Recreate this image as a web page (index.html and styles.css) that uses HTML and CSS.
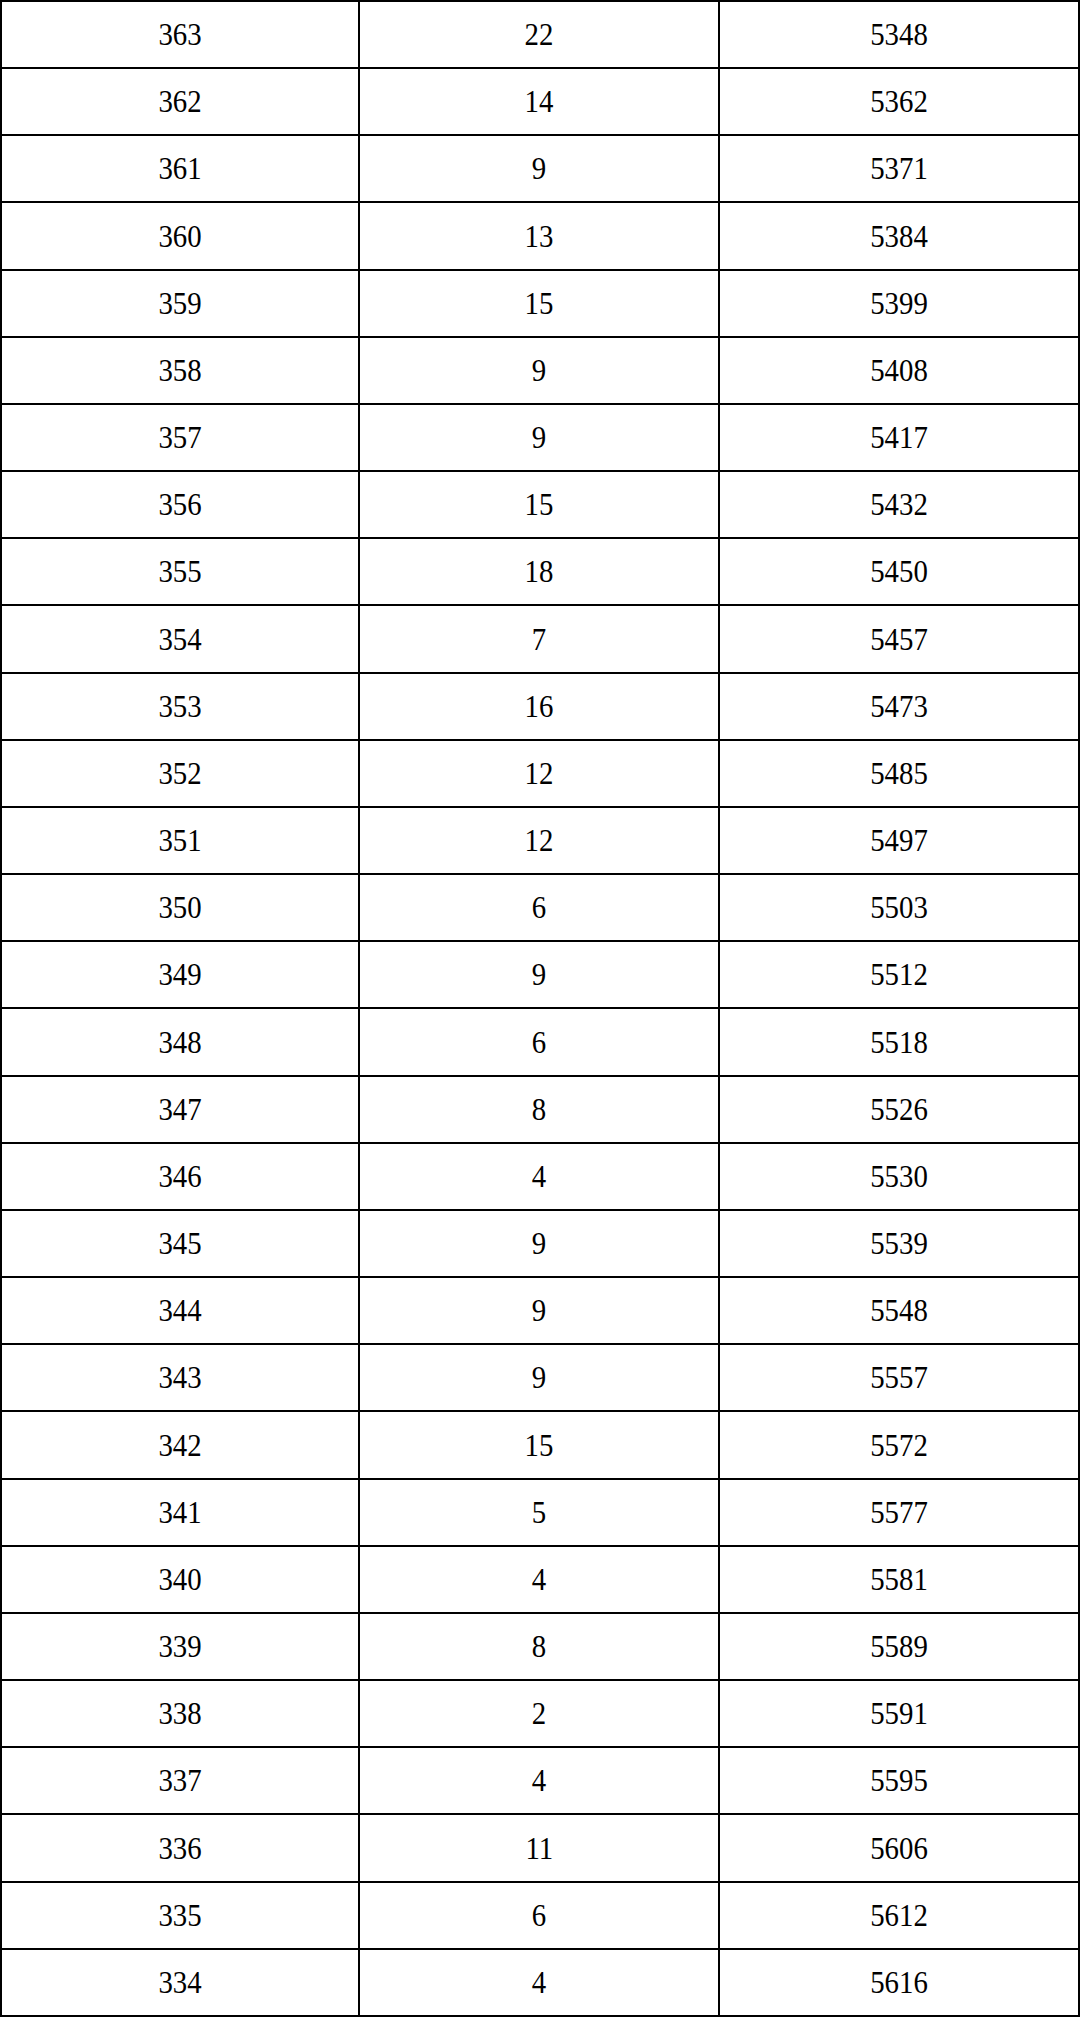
FILE: index.html
```html
<!DOCTYPE html>
<html lang="zh">
<head>
<meta charset="utf-8">
<title>分数段表</title>
<link rel="stylesheet" href="styles.css">
</head>
<body>
<div class="grid">
<div class="cell"><span>363</span></div><div class="cell"><span>22</span></div><div class="cell"><span>5348</span></div>
<div class="cell"><span>362</span></div><div class="cell"><span>14</span></div><div class="cell"><span>5362</span></div>
<div class="cell"><span>361</span></div><div class="cell"><span>9</span></div><div class="cell"><span>5371</span></div>
<div class="cell"><span>360</span></div><div class="cell"><span>13</span></div><div class="cell"><span>5384</span></div>
<div class="cell"><span>359</span></div><div class="cell"><span>15</span></div><div class="cell"><span>5399</span></div>
<div class="cell"><span>358</span></div><div class="cell"><span>9</span></div><div class="cell"><span>5408</span></div>
<div class="cell"><span>357</span></div><div class="cell"><span>9</span></div><div class="cell"><span>5417</span></div>
<div class="cell"><span>356</span></div><div class="cell"><span>15</span></div><div class="cell"><span>5432</span></div>
<div class="cell"><span>355</span></div><div class="cell"><span>18</span></div><div class="cell"><span>5450</span></div>
<div class="cell"><span>354</span></div><div class="cell"><span>7</span></div><div class="cell"><span>5457</span></div>
<div class="cell"><span>353</span></div><div class="cell"><span>16</span></div><div class="cell"><span>5473</span></div>
<div class="cell"><span>352</span></div><div class="cell"><span>12</span></div><div class="cell"><span>5485</span></div>
<div class="cell"><span>351</span></div><div class="cell"><span>12</span></div><div class="cell"><span>5497</span></div>
<div class="cell"><span>350</span></div><div class="cell"><span>6</span></div><div class="cell"><span>5503</span></div>
<div class="cell"><span>349</span></div><div class="cell"><span>9</span></div><div class="cell"><span>5512</span></div>
<div class="cell"><span>348</span></div><div class="cell"><span>6</span></div><div class="cell"><span>5518</span></div>
<div class="cell"><span>347</span></div><div class="cell"><span>8</span></div><div class="cell"><span>5526</span></div>
<div class="cell"><span>346</span></div><div class="cell"><span>4</span></div><div class="cell"><span>5530</span></div>
<div class="cell"><span>345</span></div><div class="cell"><span>9</span></div><div class="cell"><span>5539</span></div>
<div class="cell"><span>344</span></div><div class="cell"><span>9</span></div><div class="cell"><span>5548</span></div>
<div class="cell"><span>343</span></div><div class="cell"><span>9</span></div><div class="cell"><span>5557</span></div>
<div class="cell"><span>342</span></div><div class="cell"><span>15</span></div><div class="cell"><span>5572</span></div>
<div class="cell"><span>341</span></div><div class="cell"><span>5</span></div><div class="cell"><span>5577</span></div>
<div class="cell"><span>340</span></div><div class="cell"><span>4</span></div><div class="cell"><span>5581</span></div>
<div class="cell"><span>339</span></div><div class="cell"><span>8</span></div><div class="cell"><span>5589</span></div>
<div class="cell"><span>338</span></div><div class="cell"><span>2</span></div><div class="cell"><span>5591</span></div>
<div class="cell"><span>337</span></div><div class="cell"><span>4</span></div><div class="cell"><span>5595</span></div>
<div class="cell"><span>336</span></div><div class="cell"><span>11</span></div><div class="cell"><span>5606</span></div>
<div class="cell"><span>335</span></div><div class="cell"><span>6</span></div><div class="cell"><span>5612</span></div>
<div class="cell"><span>334</span></div><div class="cell"><span>4</span></div><div class="cell"><span>5616</span></div>
</div>
</body>
</html>
```
FILE: styles.css
```css
html, body {
  margin: 0;
  padding: 0;
  background: #fff;
}
.grid {
  width: 1080px;
  height: 2017px;
  box-sizing: border-box;
  padding: 2px;
  background: #000;
  display: grid;
  grid-template-columns: 356px 358px 358px;
  grid-template-rows: repeat(30, 1fr);
  gap: 2px;
}
.cell {
  background: #fff;
  display: flex;
  align-items: center;
  justify-content: center;
  font-family: "Liberation Serif", "Noto Sans CJK SC", serif;
  font-size: 32px;
  color: #000;
}
.cell span {
  display: inline-block;
  transform: scaleX(0.9);
}
```
